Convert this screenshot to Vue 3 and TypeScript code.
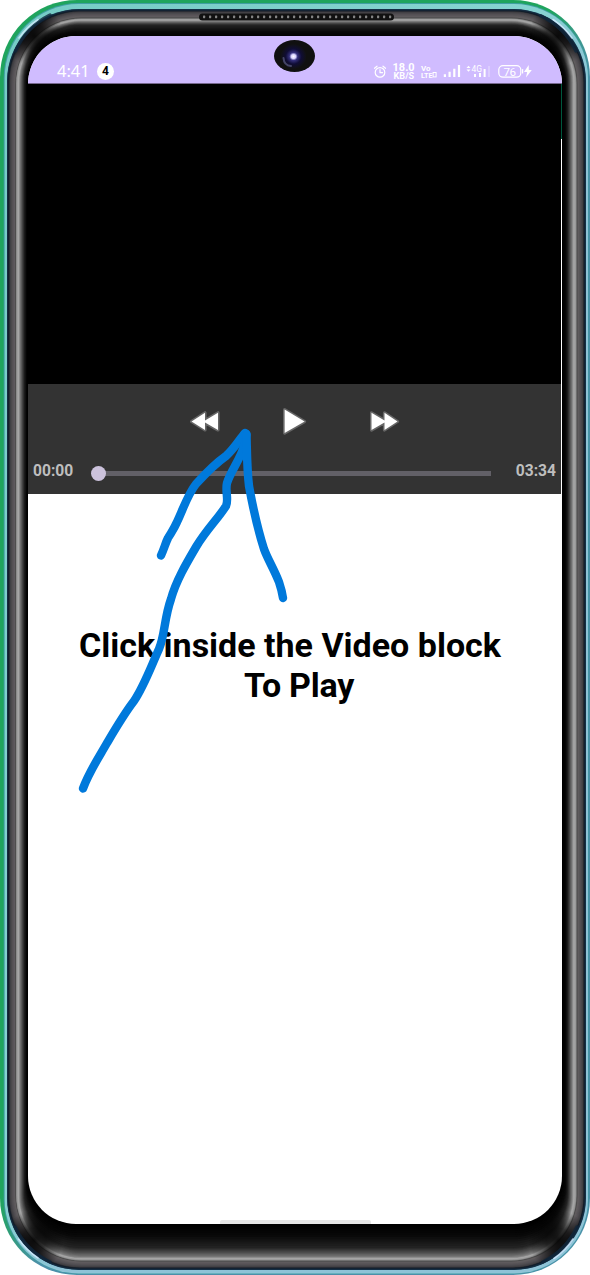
<script setup lang="ts">
interface Ring { l: number; t: number; r: number; b: number; rad: number; c: number[] }

// Metallic bezel profile, from the outer edge towards the glass.
const profile: Ring[] = [
  { l: 7, t: 9, r: 4, b: 5, rad: 72, c: [22, 52, 76] },
  { l: 8.5, t: 11, r: 6, b: 7, rad: 71, c: [18, 27, 38] },
  { l: 10, t: 12, r: 7, b: 8, rad: 70, c: [64, 63, 67] },
  { l: 12, t: 14, r: 9, b: 10, rad: 69, c: [82, 79, 83] },
  { l: 15, t: 17, r: 12, b: 13, rad: 67, c: [100, 96, 98] },
  { l: 15.7, t: 18, r: 13, b: 14, rad: 66, c: [72, 72, 72] },
  { l: 16.5, t: 19, r: 14, b: 15, rad: 65, c: [150, 150, 150] },
  { l: 18.5, t: 20, r: 16, b: 16.5, rad: 63, c: [170, 170, 170] },
  { l: 20, t: 21.5, r: 18, b: 18, rad: 61, c: [120, 120, 120] },
  { l: 22, t: 23, r: 20, b: 22, rad: 59, c: [76, 76, 76] },
  { l: 24, t: 25, r: 22, b: 27, rad: 56, c: [34, 34, 34] },
  { l: 26, t: 31, r: 24, b: 38, rad: 52, c: [9, 9, 9] },
  { l: 27.5, t: 36, r: 27, b: 48, rad: 49, c: [0, 0, 0] },
]

const STEPS = 5
const mix = (a: number, b: number, f: number) => a + (b - a) * f
const rings: Ring[] = profile.slice(0, -1).flatMap((p, i) => {
  const q = profile[i + 1]
  return Array.from({ length: STEPS }, (_, s) => {
    const f = s / STEPS
    return {
      l: mix(p.l, q.l, f), t: mix(p.t, q.t, f), r: mix(p.r, q.r, f), b: mix(p.b, q.b, f),
      rad: mix(p.rad, q.rad, f),
      c: p.c.map((v, k) => Math.round(mix(v, q.c[k], f))),
    }
  })
})
rings.push(profile[profile.length - 1])

const slots = Array.from({ length: 32 }, (_, i) => 203 + i * 6)
</script>

<template>
  <div class="phone">
    <svg class="bezel" viewBox="0 0 590 1275" aria-hidden="true">
      <defs>
        <linearGradient id="edge" x1="0" y1="0" x2="1" y2="1">
          <stop offset=".47" stop-color="#1fa45d" />
          <stop offset=".53" stop-color="#4d8faa" />
        </linearGradient>
        <linearGradient id="shine" x1="0" y1="0" x2="1" y2="1">
          <stop offset="0" stop-color="#75cbc5" />
          <stop offset=".45" stop-color="#86d3d1" />
          <stop offset=".55" stop-color="#8fc3d7" />
        </linearGradient>
        <radialGradient id="shade">
          <stop offset="0" stop-color="#000" stop-opacity=".9" />
          <stop offset=".4" stop-color="#000" stop-opacity=".7" />
          <stop offset="1" stop-color="#000" stop-opacity="0" />
        </radialGradient>
        <radialGradient id="lens">
          <stop offset="0" stop-color="#fff" />
          <stop offset=".17" stop-color="#d9d4ff" />
          <stop offset=".32" stop-color="#34307b" />
          <stop offset=".6" stop-color="#100d36" />
          <stop offset="1" stop-color="#111" />
        </radialGradient>
        <clipPath id="metal"><rect x="9" y="11" width="575" height="1257" rx="71" /></clipPath>
      </defs>
      <rect width="590" height="1275" rx="77" fill="url(#edge)" />
      <rect x="3.7" y="3" width="584.8" height="1271" rx="75" fill="#3f9fa3" />
      <rect x="4.7" y="4" width="583.3" height="1269.5" rx="74" fill="url(#shine)" />
      <rect
        v-for="(g, i) in rings" :key="i" :x="g.l" :y="g.t" :width="590 - g.l - g.r"
        :height="1275 - g.t - g.b" :rx="g.rad" :fill="`rgb(${g.c.join(',')})`"
      />
      <g clip-path="url(#metal)" fill="url(#shade)">
        <ellipse cx="34" cy="36" rx="30" ry="30" />
        <ellipse cx="558" cy="36" rx="30" ry="30" />
        <ellipse cx="34" cy="1240" rx="30" ry="30" />
        <ellipse cx="558" cy="1240" rx="30" ry="30" />
      </g>
      <g fill="none" stroke-linecap="round">
        <path
          stroke="#10273c" stroke-width="3.4" opacity=".8"
          d="M15.500 51A74 74 0 0 1 50 15M541 16A74 74 0 0 1 576 51M15 1227A74 74 0 0 0 50 1262M543 1262A74 74 0 0 0 577 1227"
        />
        <path
          stroke="#d3eaff" stroke-width="1.6" opacity=".8"
          d="M19 38A73 73 0 0 1 38 19.500M553 19.500A73 73 0 0 1 572 38M18.500 1239A73 73 0 0 0 38 1258M554 1258.500A73 73 0 0 0 573 1239"
        />
      </g>
      <rect x="199" y="13.5" width="195" height="7" rx="3.5" fill="#111" />
      <rect v-for="x in slots" :key="x" :x="x" y="15.6" width="2.2" height="2.6" rx=".6" fill="#858585" />
    </svg>

    <div class="screen">
      <header class="status">
        <span class="clock">4:41</span>
        <span class="count">4</span>
        <svg class="indicators" width="162" height="22" viewBox="372 60 162 22">
          <g fill="none" stroke="#fff" stroke-width="1.2" stroke-linecap="round" stroke-linejoin="round">
            <circle cx="380" cy="72.4" r="4.8" />
            <path d="M380 69.5V72.7H382.6M374.5 68.3L377 66.2M383 66.2L385.5 68.3" />
            <rect x="498.8" y="65.6" width="22" height="11.6" rx="4.2" />
            <path d="M522.6 69.5V73" />
          </g>
          <g class="tiny" fill="#fff">
            <text x="392.6" y="71.2" font-size="11" textLength="22" lengthAdjust="spacingAndGlyphs">18.0</text>
            <text x="393.6" y="79" font-size="9" textLength="20.5" lengthAdjust="spacingAndGlyphs">KB/S</text>
            <text x="421" y="71" font-size="8" textLength="9.5" lengthAdjust="spacingAndGlyphs">Vo</text>
            <text x="421" y="77.600" font-size="7.6" textLength="11.5" lengthAdjust="spacingAndGlyphs">LTE</text>
            <text x="471.4" y="72.400" font-size="8.800" textLength="10.500" lengthAdjust="spacingAndGlyphs" class="thin">4G</text>
            <text x="503.4" y="75.6" font-size="11.6" textLength="12.6" class="thin">76</text>
          </g>
          <rect x="433.1" y="72.5" width="3" height="4.4" fill="none" stroke="#fff" />
          <path fill="#fff" d="M443.8 74.3h2.2v2.8h-2.2zM448.5 71.8h2.2v5.3h-2.2zM453.2 68.7h2.2v8.4h-2.2zM457.9 65h2.2v12.1h-2.2zM474 74h2v3h-2zM479 73h2v4h-2zM483.6 69h2v8h-2zM466.5 68l2-2.2 2 2.2zM466.5 69.5l2 2.2 2-2.2zM528.7 65L524 72h3.2L526 77.5 531.8 70h-3z" />
          <path fill="#fff" opacity=".25" d="M488 66h2v11h-2z" />
        </svg>
      </header>
      <div class="video"></div>
      <div class="controls">
        <div class="buttons">
          <svg width="30" height="26" viewBox="190 409 30 26">
            <path class="key" d="M191.5 421.5L205 412.8v7.6L218 412.8v17.2L205 422.6V430z" />
          </svg>
          <svg width="30" height="30" viewBox="280 407 30 30">
            <path class="key" d="M284.6 409.5L304.6 421.5 284.600 433z" />
          </svg>
          <svg width="30" height="26" viewBox="370 409 30 26">
            <path class="key" d="M371.5 412.8L384.5 420.4V412.8L397.5 421.5 384.5 430v-7.4L371.5 430z" />
          </svg>
        </div>
        <div class="progress">
          <span>00:00</span>
          <div class="track"><i class="thumb"></i></div>
          <span>03:34</span>
        </div>
      </div>
      <main class="content">
        <h1><span class="first">Click inside the Video block</span><span class="second">To Play</span></h1>
      </main>
      <div class="home"></div>
      <div class="edge-line"></div>
    </div>

    <svg class="overlay" viewBox="0 0 590 1275" aria-hidden="true">
      <ellipse cx="294.5" cy="56" rx="20.5" ry="16" fill="#101010" />
      <ellipse cx="293.5" cy="56.500" rx="13" ry="12.5" fill="url(#lens)" />
      <path d="M283.5 58Q284 65.5 291 66" fill="none" stroke="#777aa9" stroke-width="2" stroke-linecap="round" opacity=".5" />
      <g fill="none" stroke="#0079db" stroke-width="8.4" stroke-linecap="round" stroke-linejoin="round">
        <path d="M161 555.5C164 549 165.5 543 168 538C171.5 532 174 529 177 522C184 507 188 494 196 484C206 473 216 463 226 456C234 449 239 440 245 433" />
        <path d="M83 788.5C89 772 99 757 107 743C117 726 124 714 134 701C144 686 150 669 159 649C165 635 164 619 171 599C176 581 186 564 196 547C207 529 217 520 226 506C229 500 225 491 227 483C231 470 241 459 245 443L246.5 434" />
        <path d="M246.5 435C247 453 247 470 249 486C253 508 257 527 264 549C268 560 273 567 279 582C281 588 282 591 283 598" />
      </g>
    </svg>
  </div>
</template>

<style>
body { margin: 0; background: #fff; }
</style>

<style scoped>
.phone {
  position: relative;
  box-sizing: border-box;
  width: 590px;
  height: 1275px;
  padding: 36px 28px 51px;
  overflow: hidden;
  font-family: Roboto, "Liberation Sans", sans-serif;
}
.bezel, .overlay { position: absolute; left: 0; top: 0; width: 590px; height: 1275px; }
.overlay { pointer-events: none; }
.screen {
  position: relative;
  display: flex;
  flex-direction: column;
  width: 534px;
  height: 1188px;
  overflow: hidden;
  background: #fff;
  border-radius: 48px;
}
.status {
  display: flex;
  align-items: flex-end;
  box-sizing: border-box;
  height: 48px;
  padding: 0 28px 2px 29px;
  background: #d0bcff;
  border-bottom: 1px solid #77698e;
  color: #fff;
}
.clock {
  width: 40px;
  margin-bottom: 0;
  font: 400 16.5px/20px "Noto Sans", sans-serif;
}
.count {
  width: 17px;
  height: 17px;
  margin-bottom: 1.5px;
  border-radius: 50%;
  background: #fff;
  color: #000;
  font-size: 12px;
  font-weight: 700;
  line-height: 17px;
  text-align: center;
}
.indicators { margin-left: auto; margin-bottom: -1px; }
.tiny { font-weight: 700; }
.thin { font-weight: 400; }
.video { width: 533px; height: 300px; background: #000; }
.controls {
  box-sizing: border-box;
  width: 533px;
  height: 110px;
  padding-top: 23px;
  background: #333;
}
.buttons {
  display: flex;
  justify-content: center;
  align-items: center;
  gap: 60px;
  height: 30px;
}
.key {
  fill: #fff;
  stroke: #666;
  stroke-width: 3.2;
  stroke-linejoin: round;
  paint-order: stroke;
}
.progress {
  display: flex;
  align-items: center;
  justify-content: space-between;
  height: 20px;
  margin-top: 24px;
  padding: 0 5px;
  color: #bebebe;
  font-size: 15.6px;
  font-weight: 700;
}
.track {
  position: relative;
  width: 393px;
  height: 5px;
  margin: 5px 0 0;
  background: #626067;
}
.thumb {
  position: absolute;
  left: -7px;
  top: -5px;
  width: 15px;
  height: 15px;
  border-radius: 50%;
  background: #ccc2dc;
}
.content { flex: 1; padding-top: 131px; }
h1 {
  display: flex;
  flex-direction: column;
  margin: 0;
  color: #000;
  font-size: 34px;
  font-weight: 700;
  line-height: 40px;
  white-space: nowrap;
}
.first { margin-left: 51px; }
.second { margin-left: 216px; letter-spacing: -.25px; }
.home {
  align-self: center;
  width: 151px;
  height: 4px;
  border-radius: 2px 2px 0 0;
  background: #e6e6e6;
}
.edge-line {
  position: absolute;
  top: 48px;
  right: 0;
  width: 1px;
  height: 55px;
  background: #00573d;
}
</style>
